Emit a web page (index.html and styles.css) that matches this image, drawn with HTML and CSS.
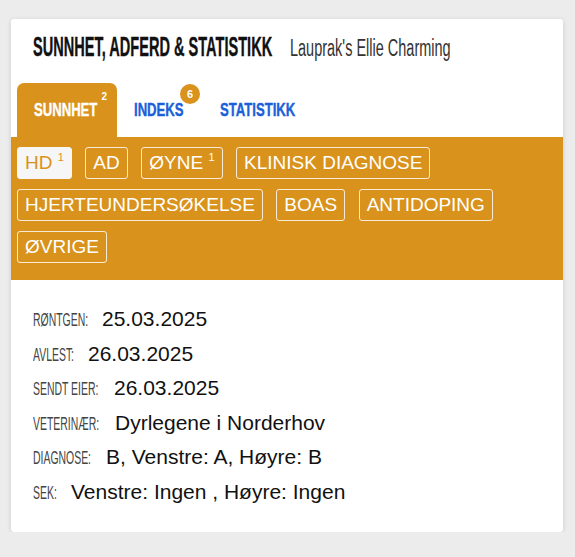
FILE: index.html
```html
<!DOCTYPE html>
<html lang="no">
<head>
<meta charset="utf-8">
<link rel="stylesheet" href="styles.css">
</head>
<body>
<div class="card">
  <div class="head">
    <h1 class="title"><span class="cw w-title"><span class="ci">SUNNHET, ADFERD &amp; STATISTIKK</span></span></h1>
    <span class="sub"><span class="cw w-sub"><span class="ci">Lauprak's Ellie Charming</span></span></span>
  </div>
  <div class="tabs">
    <div class="tab active"><span class="cw w-sunnhet"><span class="ci">SUNNHET</span></span><sup class="tsup">2</sup></div>
    <div class="tab tab-indeks"><span class="cw w-indeks"><span class="ci">INDEKS</span></span><span class="badge">6</span></div>
    <div class="tab"><span class="cw w-stat"><span class="ci">STATISTIKK</span></span></div>
  </div>
  <div class="panel">
    <span class="btn sel">HD <sup>1</sup></span>
    <span class="btn">AD</span>
    <span class="btn">ØYNE <sup>1</sup></span>
    <span class="btn">KLINISK DIAGNOSE</span>
    <span class="btn">HJERTEUNDERSØKELSE</span>
    <span class="btn">BOAS</span>
    <span class="btn">ANTIDOPING</span>
    <span class="btn">ØVRIGE</span>
  </div>
  <div class="details">
    <div class="row"><span class="lbl"><span class="cw w-l1"><span class="ci">Røntgen:</span></span></span><span class="val">25.03.2025</span></div>
    <div class="row"><span class="lbl"><span class="cw w-l2"><span class="ci">Avlest:</span></span></span><span class="val">26.03.2025</span></div>
    <div class="row"><span class="lbl"><span class="cw w-l3"><span class="ci">Sendt eier:</span></span></span><span class="val">26.03.2025</span></div>
    <div class="row"><span class="lbl"><span class="cw w-l4"><span class="ci">Veterinær:</span></span></span><span class="val">Dyrlegene i Norderhov</span></div>
    <div class="row"><span class="lbl"><span class="cw w-l5"><span class="ci">Diagnose:</span></span></span><span class="val">B, Venstre: A, Høyre: B</span></div>
    <div class="row"><span class="lbl"><span class="cw w-l6"><span class="ci">Sek:</span></span></span><span class="val">Venstre: Ingen , Høyre: Ingen</span></div>
  </div>
</div>
</body>
</html>
```
FILE: styles.css
```css
html, body { margin: 0; padding: 0; }
body {
  background: #ececec;
  font-family: "Liberation Sans", Arial, sans-serif;
  padding: 19px 12px 0 11px;
}
.card {
  background: #fff;
  border-radius: 3px;
  box-shadow: 0 1px 5px rgba(0,0,0,0.14);
}
/* condensed text: fixed-width wrapper, horizontally scaled inner text */
.cw {
  display: inline-block;
  white-space: nowrap;
}
.ci {
  display: inline-block;
  white-space: nowrap;
  transform-origin: 0 50%;
}
.head {
  display: flex;
  align-items: baseline;
  height: 64px;
  box-sizing: border-box;
  padding: 14px 22px 0 22px;
  line-height: 28px;
}
.title {
  margin: 0;
  font-weight: 700;
  font-size: 28px;
  color: #111;
}
.w-title { width: 243px; }
.w-title .ci { transform: scaleX(0.52); -webkit-text-stroke: 0.4px #111; }
.sub {
  margin-left: 14px;
  font-size: 23px;
  color: #333;
}
.w-sub { width: 161px; }
.w-sub .ci { transform: scaleX(0.63); }

.tabs {
  display: flex;
  padding: 0 6px;
  height: 54px;
}
.tab {
  position: relative;
  font-weight: 700;
  font-size: 19px;
  color: #1b5fd9;
  padding: 0 17px;
  height: 54px;
  line-height: 54px;
}
.tab .ci { transform: scaleX(0.69); -webkit-text-stroke: 0.4px currentColor; }
.w-sunnhet { width: 64px; }
.w-indeks { width: 50px; }
.w-stat { width: 76px; }
.tab-indeks { padding-right: 19px; }
.tab.active {
  background: #d9921c;
  color: #fff;
  border-radius: 7px 7px 0 0;
  padding-right: 19px;
}
.tsup {
  position: absolute;
  top: 9px;
  right: 10px;
  font-size: 10px;
  line-height: 10px;
  vertical-align: baseline;
}
.badge {
  position: absolute;
  top: 1px;
  left: 63px;
  width: 20px;
  height: 20px;
  border-radius: 50%;
  background: #d9921c;
  color: #fff;
  font-size: 11px;
  font-weight: 700;
  line-height: 20px;
  text-align: center;
}
.panel {
  background: #d9921c;
  display: flex;
  flex-wrap: wrap;
  gap: 10px 13.5px;
  padding: 10px 6px 17px 6px;
}
.btn {
  display: inline-block;
  height: 32px;
  box-sizing: border-box;
  border: 1.5px solid rgba(255,255,255,0.82);
  border-radius: 3px;
  color: #fff;
  font-size: 19px;
  line-height: 29px;
  padding: 0 7px;
  white-space: nowrap;
}
.btn sup {
  font-size: 11px;
  vertical-align: 0;
  position: relative;
  top: -8px;
}
.btn.sel {
  background: #f6f6f6;
  border-color: #f6f6f6;
  color: #d9921c;
}
.details {
  padding: 22px 22px 23px 22px;
}
.row {
  display: flex;
  align-items: baseline;
  line-height: 34.5px;
  height: 34.5px;
}
.lbl {
  text-transform: uppercase;
  font-size: 18px;
  color: #444;
  margin-right: 14px;
}
.lbl .ci { transform: scaleX(0.58); }
.w-l1 { width: 55px; }
.w-l2 { width: 41px; }
.w-l3 { width: 67px; }
.w-l4 { width: 68px; }
.w-l5 { width: 59px; }
.w-l6 { width: 24px; }
.val {
  font-size: 21px;
  color: #111;
}
```
